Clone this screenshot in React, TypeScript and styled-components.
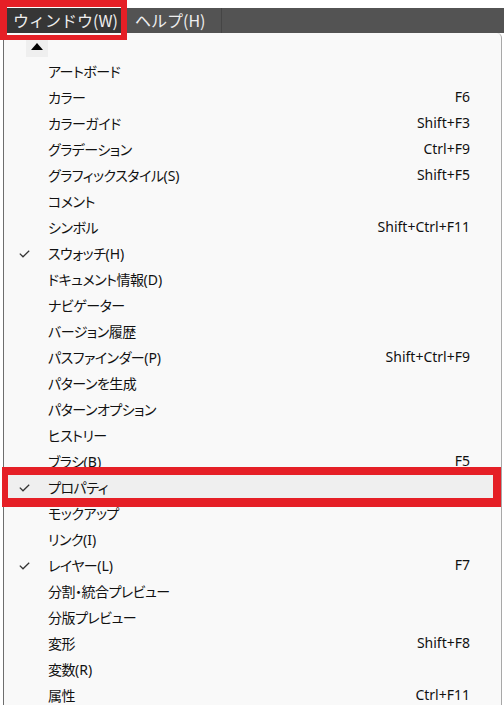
import React from "react";
import styled, { createGlobalStyle, css } from "styled-components";

const Global = createGlobalStyle`
  html, body {
    margin: 0;
    padding: 0;
    background: #ffffff;
    overflow: hidden;
  }
  body {
    font-family: "Noto Sans CJK JP", sans-serif;
  }
`;

const Root = styled.div`
  width: 504px;
  height: 705px;
  overflow: hidden;
  position: relative;
`;

const TopBar = styled.div`
  margin-top: 8px;
  height: 25px;
  padding-left: 3px;
  background: #535353;
  display: flex;
  align-items: stretch;
`;

const redBox = css`
  content: "";
  position: absolute;
  border-style: solid;
  border-color: #e51f26;
  z-index: 3;
  pointer-events: none;
`;

const BarItem = styled.div<{ $active?: boolean; $width: number }>`
  position: relative;
  box-sizing: border-box;
  width: ${(p) => p.$width}px;
  padding-left: 10px;
  display: flex;
  align-items: center;
  font-family: "Noto Sans CJK JP", sans-serif;
  font-size: 16px;
  line-height: 25px;
  color: #eeeeee;
  white-space: nowrap;
  background: ${(p) => (p.$active ? "#363636" : "transparent")};
  border-right: ${(p) => (p.$active ? "none" : "1px solid #454545")};
  ${(p) =>
    p.$active &&
    css`
      &::after {
        ${redBox};
        top: -8px;
        left: -3px;
        right: -2px;
        bottom: -7px;
        border-width: 7px 6px 5px 7px;
      }
    `}
`;

const Panel = styled.div`
  margin-left: 3px;
  width: 499px;
  box-sizing: border-box;
  background: #f9f9f9;
  border-left: 1px solid #6e6e6e;
  border-right: 1px solid #a8a8a8;
  border-top-right-radius: 5px;
  height: 680px;
`;

const ScrollArea = styled.div`
  height: 25px;
  box-sizing: border-box;
  padding-top: 7px;
  padding-left: 22px;
`;

const ScrollButton = styled.div`
  width: 22px;
  height: 17px;
  background: #efefef;
  display: flex;
  align-items: center;
  justify-content: center;
`;

const Arrow = styled.div`
  width: 0;
  height: 0;
  border-left: 6.5px solid transparent;
  border-right: 6.5px solid transparent;
  border-bottom: 7px solid #000;
  margin-top: -4px;
`;

const Row = styled.div<{ $highlight?: boolean }>`
  position: relative;
  height: 26px;
  box-sizing: border-box;
  padding-bottom: 2px;
  display: grid;
  grid-template-columns: 44px 1fr auto;
  align-items: center;
  padding-right: 31px;
  background: ${(p) => (p.$highlight ? "#efefef" : "transparent")};
  ${(p) =>
    p.$highlight &&
    css`
      &::after {
        ${redBox};
        top: -7px;
        bottom: -7px;
        left: -2px;
        right: 0px;
        border-width: 8px 8px 9px 6px;
      }
    `}
`;

const CheckCell = styled.div`
  padding-left: 15px;
  padding-top: 2px;
  display: flex;
  align-items: center;
  height: 24px;
`;

const Label = styled.div`
  font-family: "Noto Sans CJK JP", sans-serif;
  font-feature-settings: "palt" 1;
  font-size: 14px;
  letter-spacing: -0.5px;
  line-height: 24px;
  color: #111111;
  white-space: nowrap;
`;

const Mnemonic = styled.span`
  font-family: "Noto Sans", sans-serif;
  font-feature-settings: normal;
  letter-spacing: 0;
  font-size: 14px;
`;

const Shortcut = styled.div`
  font-family: "Noto Sans", sans-serif;
  font-size: 14px;
  line-height: 24px;
  color: #111111;
  text-align: right;
  white-space: nowrap;
`;

type Item = {
  label: string;
  key?: string;
  sc?: string;
  checked?: boolean;
  highlight?: boolean;
};

const items: Item[] = [
  { label: "アートボード" },
  { label: "カラー", sc: "F6" },
  { label: "カラーガイド", sc: "Shift+F3" },
  { label: "グラデーション", sc: "Ctrl+F9" },
  { label: "グラフィックスタイル", key: "S", sc: "Shift+F5" },
  { label: "コメント" },
  { label: "シンボル", sc: "Shift+Ctrl+F11" },
  { label: "スウォッチ", key: "H", checked: true },
  { label: "ドキュメント情報", key: "D" },
  { label: "ナビゲーター" },
  { label: "バージョン履歴" },
  { label: "パスファインダー", key: "P", sc: "Shift+Ctrl+F9" },
  { label: "パターンを生成" },
  { label: "パターンオプション" },
  { label: "ヒストリー" },
  { label: "ブラシ", key: "B", sc: "F5" },
  { label: "プロパティ", checked: true, highlight: true },
  { label: "モックアップ" },
  { label: "リンク", key: "I" },
  { label: "レイヤー", key: "L", checked: true, sc: "F7" },
  { label: "分割・統合プレビュー" },
  { label: "分版プレビュー" },
  { label: "変形", sc: "Shift+F8" },
  { label: "変数", key: "R" },
  { label: "属性", sc: "Ctrl+F11" },
];

const Check = () => (
  <svg width="11" height="8" viewBox="0 0 11 8">
    <polyline
      points="0.8,3.6 4,6.8 10.2,0.8"
      fill="none"
      stroke="#333"
      strokeWidth="1.25"
    />
  </svg>
);

export default function App() {
  return (
    <Root>
      <Global />
      <TopBar>
        <BarItem $active $width={122}>
          ウィンドウ(W)
        </BarItem>
        <BarItem $width={97}>ヘルプ(H)</BarItem>
      </TopBar>
      <Panel>
        <ScrollArea>
          <ScrollButton>
            <Arrow />
          </ScrollButton>
        </ScrollArea>
        {items.map((it) => (
          <Row key={it.label} $highlight={it.highlight}>
            <CheckCell>{it.checked && <Check />}</CheckCell>
            <Label>
              {it.label}
              {it.key && <Mnemonic>({it.key})</Mnemonic>}
            </Label>
            <Shortcut>{it.sc ?? ""}</Shortcut>
          </Row>
        ))}
      </Panel>
    </Root>
  );
}
